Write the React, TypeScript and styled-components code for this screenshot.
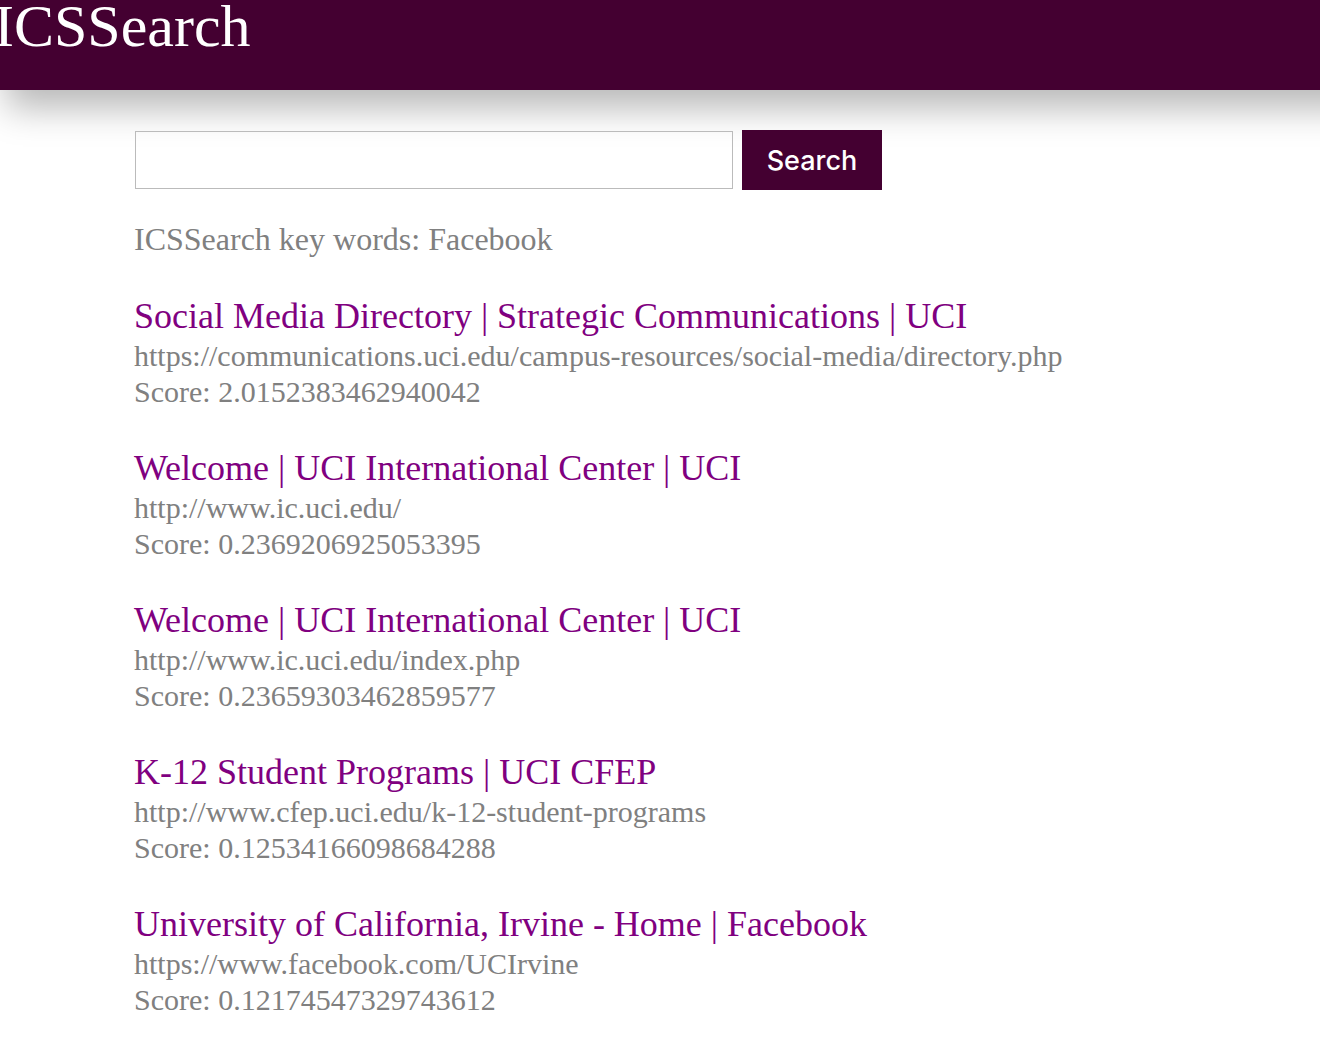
import React from "react";
import styled, { createGlobalStyle } from "styled-components";

const GlobalStyle = createGlobalStyle`
  body {
    margin: 0;
    background: #fff;
    font-family: "Liberation Serif", "Times New Roman", serif;
  }
`;

const Header = styled.header`
  height: 90px;
  background: #440031;
  color: #fff;
  box-shadow: 24px 0 34px 18px #b8b8b8;
`;

const Brand = styled.h1`
  margin: 0 0 0 -6px;
  font-size: 60px;
  line-height: 52px;
  font-weight: 400;
`;

const Main = styled.main`
  padding: 40px 134px;
`;

const SearchForm = styled.form`
  display: flex;
  align-items: center;
  gap: 9px;
  padding-left: 1px;
`;

const SearchInput = styled.input`
  box-sizing: border-box;
  width: 598px;
  height: 58px;
  margin: 0;
  padding: 0 12px;
  border: 1px solid #bbb;
  border-radius: 0;
  background: transparent;
  font: 28px "Liberation Serif", serif;
`;

const SearchButton = styled.button`
  width: 140px;
  height: 60px;
  padding: 0;
  border: 0;
  background: #440031;
  color: #fff;
  font: 500 27px Inter, sans-serif;
`;

const Keywords = styled.p`
  margin: 32px 0 38px;
  color: #808080;
  font-size: 32px;
  line-height: 34px;
`;

const Results = styled.ul`
  display: grid;
  gap: 36px;
  margin: 0;
  padding: 0;
  list-style: none;
`;

const ResultTitle = styled.a`
  display: block;
  color: #800080;
  font-size: 36px;
  line-height: 44px;
  text-decoration: none;
`;

const Detail = styled.div`
  color: #808080;
  font-size: 30px;
  line-height: 36px;
`;

const results = [
  {
    title: "Social Media Directory | Strategic Communications | UCI",
    url: "https://communications.uci.edu/campus-resources/social-media/directory.php",
    score: "2.0152383462940042",
  },
  {
    title: "Welcome | UCI International Center | UCI",
    url: "http://www.ic.uci.edu/",
    score: "0.2369206925053395",
  },
  {
    title: "Welcome | UCI International Center | UCI",
    url: "http://www.ic.uci.edu/index.php",
    score: "0.23659303462859577",
  },
  {
    title: "K-12 Student Programs | UCI CFEP",
    url: "http://www.cfep.uci.edu/k-12-student-programs",
    score: "0.12534166098684288",
  },
  {
    title: "University of California, Irvine - Home | Facebook",
    url: "https://www.facebook.com/UCIrvine",
    score: "0.12174547329743612",
  },
];

export default function App() {
  return (
    <>
      <GlobalStyle />
      <Header>
        <Brand>ICSSearch</Brand>
      </Header>
      <Main>
        <SearchForm onSubmit={(e) => e.preventDefault()}>
          <SearchInput type="text" aria-label="Search key words" />
          <SearchButton type="submit">Search</SearchButton>
        </SearchForm>
        <Keywords>ICSSearch key words: Facebook</Keywords>
        <Results>
          {results.map((r) => (
            <li key={r.url}>
              <ResultTitle href={r.url}>{r.title}</ResultTitle>
              <Detail>{r.url}</Detail>
              <Detail>Score: {r.score}</Detail>
            </li>
          ))}
        </Results>
      </Main>
    </>
  );
}
